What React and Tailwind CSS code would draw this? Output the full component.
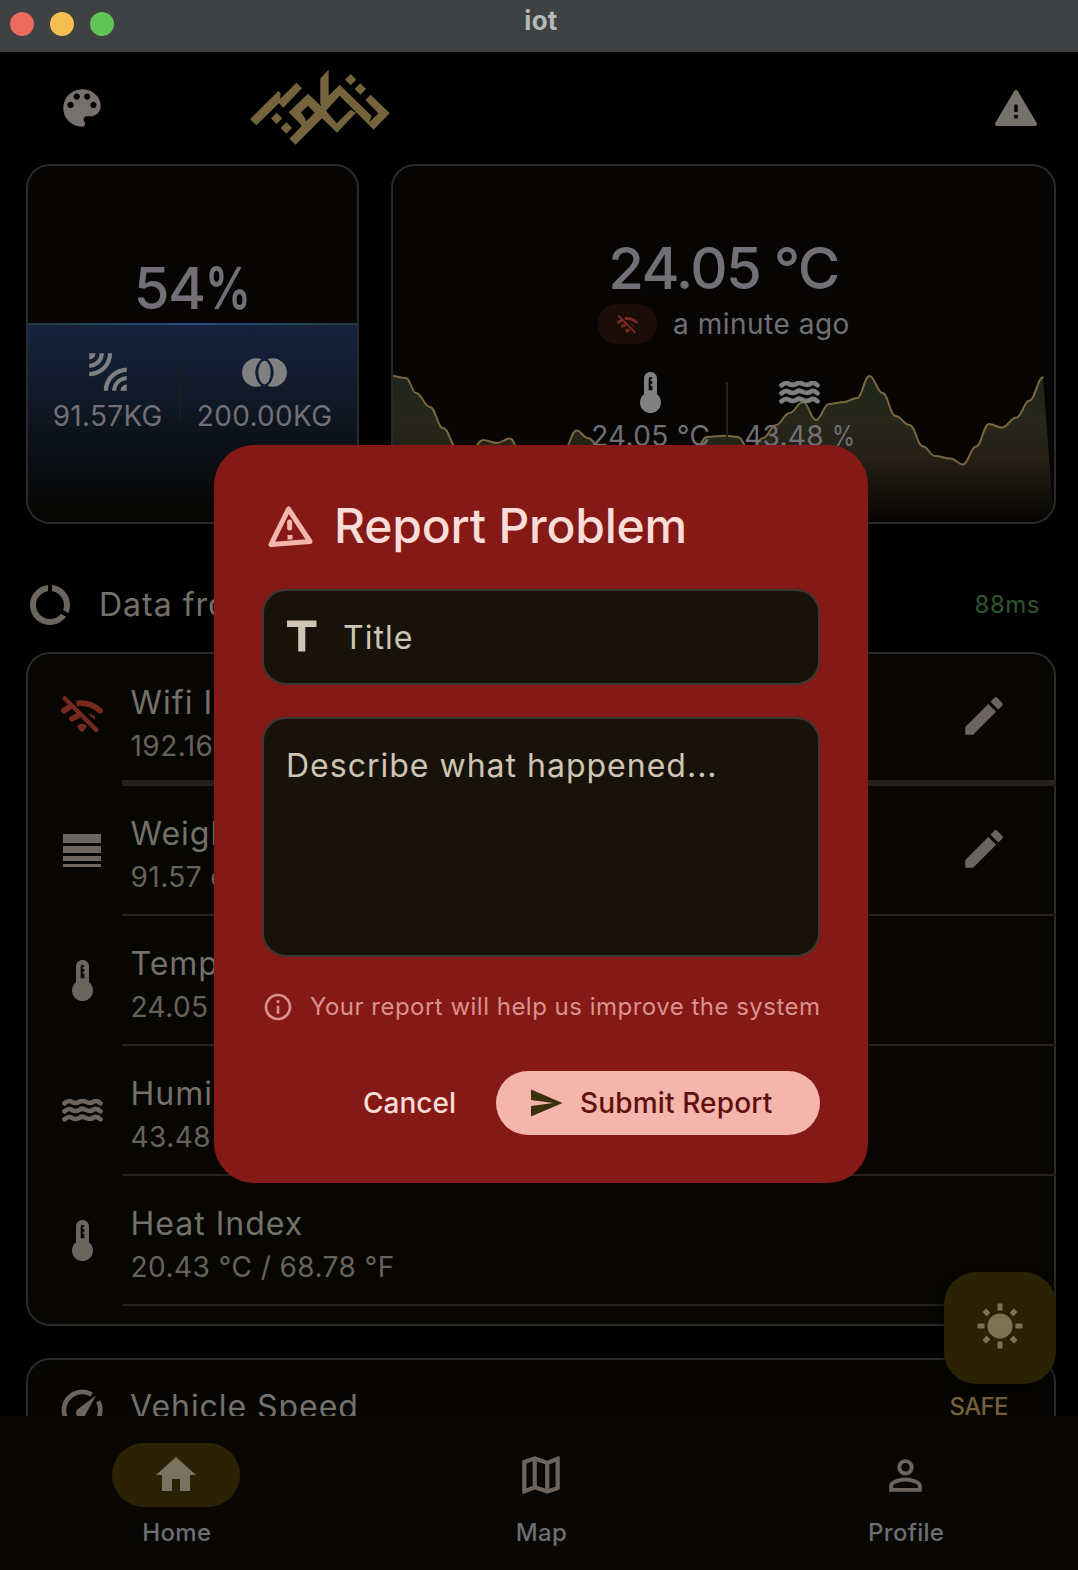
import React from "react";
import {
  MdLeakAdd,
  MdJoinFull,
  MdDataUsage,
  MdEdit,
  MdHome,
  MdOutlineMap,
  MdPersonOutline,
  MdInfoOutline,
  MdSend,
} from "react-icons/md";

function Thermometer() {
  return (
    <svg width="21" height="41" viewBox="0 0 63 123" fill="currentColor">
      <path
        fillRule="evenodd"
        d="M31.500 0C21 0 12 8 12 19V67A31.500 31.500 0 1 0 51 67V19C51 8 42 0 31.500 0ZM31 15C35 15 37 17 37 21H32V27H37V35H32V41H37V55H26V21C26 17 28 15 31 15Z"
      />
    </svg>
  );
}

function Waves() {
  const d = "M7 13C18 4 23 5 30 9S44 13 52 8S64 5 72 9S86 13 94 8S108 6 115 13";
  return (
    <svg width="41" height="23" viewBox="0 0 122 69" fill="none" stroke="currentColor" strokeWidth="14" strokeLinecap="round">
      <path d={d} />
      <path d={d} transform="translate(0 24)" />
      <path d={d} transform="translate(0 48)" />
    </svg>
  );
}

function WifiSlash({ width = 42, height = 36 }) {
  return (
    <svg width={width} height={height} viewBox="0 0 126 108" fill="none" stroke="currentColor" strokeLinecap="round">
      <path d="M11 7L106 102" strokeWidth="13" />
      <path d="M47 22Q88 17 117 44" strokeWidth="17" strokeLinecap="butt" />
      <circle cx="117" cy="44" r="8.500" fill="currentColor" stroke="none" />
      <path d="M9 44L24 34" strokeWidth="18" />
      <path d="M33 68L50 59" strokeWidth="17" />
      <path d="M80 53Q92 52 102 62V71Z" fill="currentColor" stroke="none" />
      <path d="M48 90Q63 76 78 90Q77 94 67 106Q63 109 58 106Q49 96 48 90Z" fill="currentColor" stroke="none" />
    </svg>
  );
}

function Sun() {
  return (
    <svg className="-mt-1" width="46" height="46" viewBox="0 0 46 46" fill="currentColor">
      <circle cx="23" cy="23" r="12.500" />
      {[0, 90, 180, 270].map((a) => (
        <rect key={a} x="20.500" y="0.500" width="5" height="7" rx="0.500" transform={`rotate(${a} 23 23)`} />
      ))}
      {[45, 135, 225, 315].map((a) => (
        <rect key={a} x="20.500" y="0.700" width="5" height="6" rx="0.500" transform={`rotate(${a} 23 23)`} />
      ))}
    </svg>
  );
}

function Logo() {
  return (
    <svg width="180" height="100" viewBox="0 0 540 300" fill="currentColor">
      <path d="M60 178L145 93L152 100L150 117L199 68L216 85L160 143L147 130L79 196Z" />
      <path d="M140 158L157 175L140 192L123 175ZM169 187L186 204L169 221L152 204ZM362 42L379 59L362 76L345 59ZM391 70L408 87L391 104L374 87Z" />
      <path
        fillRule="evenodd"
        d="M296 29L271 55V130L274 139L234 101L176 157L213 194L215 198L178 236L197 254L276 175L321 218L378 158L362 149L320 190L288 152L329 107L431 209L479 160L422 104L406 120L445 160L418 187L425 168L329 74L296 107ZM213 157L234 137L254 158L228 184L226 176Z"
      />
    </svg>
  );
}

const points = [
  [391, 376], [406, 378], [416, 393], [430, 407], [443, 428], [457, 448], [470, 452], [483, 440], [497, 443], [510, 438.500],
  [523, 460], [550, 466], [563, 452], [576.500, 430.500], [588, 438], [603, 452], [640, 468], [690, 462], [707, 437],
  [725, 435.700], [738, 437], [750, 452], [763, 438], [776, 425], [789.500, 413], [803, 402], [816, 420], [829, 404],
  [844, 402], [857, 398], [869.500, 376], [882.500, 393], [895.500, 416], [909.500, 425], [923, 446.500], [935, 456], [950.500, 458.500],
  [963, 464.500], [976, 446.500], [989, 424], [1002, 427.500], [1016.500, 417.500], [1029.500, 400.500], [1043, 377.500],
];
const line = points.reduce((d, [x, y], i) => {
  if (i === 0) return `M${x} ${y}`;
  const [px, py] = points[i - 1];
  const k = (x - px) * 0.42;
  return `${d}C${px + k} ${py} ${x - k} ${y} ${x} ${y}`;
}, "");

function TempChart() {
  return (
    <svg className="absolute -left-0.5 -top-0.5" width="665" height="360" viewBox="391 164 665 360">
      <defs>
        <linearGradient id="area" x1="0" y1="376" x2="0" y2="522" gradientUnits="userSpaceOnUse">
          <stop offset="0" stopColor="#1d261b" />
          <stop offset="0.300" stopColor="#27271a" />
          <stop offset="0.550" stopColor="#262117" />
          <stop offset="1" stopColor="#060503" />
        </linearGradient>
      </defs>
      <path d={`${line}L1054 522H391Z`} fill="url(#area)" />
      <path d={line} fill="none" stroke="#7a673f" strokeWidth="2" strokeLinecap="round" />
    </svg>
  );
}

function Metric({ icon, children }) {
  return (
    <div className="flex flex-col items-center">
      <div className="flex h-12 items-center text-[#808080]">{icon}</div>
      <div className="whitespace-nowrap text-[28px] leading-10 tracking-[0.3px]">{children}</div>
    </div>
  );
}

function Row({ icon, title, sub, edit, first, danger }) {
  return (
    <>
      <div className={first ? "flex h-[126px] pl-[30px] pr-[45px]" : "flex h-32 pl-[30px] pr-[45px]"}>
        <div className={`flex w-12 items-center justify-center ${danger ? "pb-[7px] text-[#76291f]" : "text-[#6b655e]"}`}>{icon}</div>
        <div className={first ? "ml-[24.5px] flex-1 pt-[25px]" : "ml-[24.5px] flex-1 pt-6"}>
          <div className="text-[32px] leading-[48px] tracking-[1px] text-[#74716b]">{title}</div>
          <div className="-mt-px text-[28px] leading-10 tracking-[0.45px] text-[#67625c]">{sub}</div>
        </div>
        {edit && (
          <div className="flex items-center pb-[3px] text-[#6b655e]">
            <MdEdit size={50} />
          </div>
        )}
      </div>
      <div className={first ? "-mr-0.5 ml-[94px] h-1.5 bg-[#24221b]" : "-mr-0.5 ml-[94px] h-0.5 bg-[#24221b]"} />
    </>
  );
}

function NavItem({ icon, label, active }) {
  return (
    <div className="flex flex-1 flex-col items-center">
      <div className={`flex h-16 w-32 items-center justify-center rounded-full ${active ? "bg-[#2b2205] text-[#7a7260]" : "text-[#6b655e]"}`}>{icon}</div>
      <div className="mt-1 pl-px text-2xl leading-[44px] font-medium tracking-[0.3px] text-[#6f6c74]">{label}</div>
    </div>
  );
}

function ReportDialog() {
  return (
    <div className="absolute left-[214px] top-[445px] flex h-[738px] w-[654px] flex-col rounded-[40px] bg-[#851916] px-12 pt-[52px]">
      <div className="flex h-[60px] items-center pl-1.5">
        <svg width="45" height="42" viewBox="0 0 45 42" fill="none" stroke="#f4b5ac" strokeWidth="5" strokeLinejoin="round">
          <path d="M20.500 3L3 38.500L42 35.500Z" />
          <path d="M21.600 16V22" strokeLinecap="round" />
          <path d="M22 29V33.500" strokeLinecap="butt" />
        </svg>
        <h1 className="-mt-0.5 ml-[21px] whitespace-nowrap text-[48px] leading-[60px] font-medium tracking-[-0.2px] text-[#fadcd8]">Report Problem</h1>
      </div>
      <div className="mt-8 flex h-24 items-center rounded-3xl border-2 border-[#3c372f] bg-[#17130b] pl-[23px]">
        <svg className="-mt-0.5" width="30" height="32" viewBox="0 0 30 32" fill="#cfc5b4">
          <path d="M0 0.500H29.500V7H18.300V31.500H11.200V7H0Z" />
        </svg>
        <span className="ml-[26px] mt-0.5 text-[32px] tracking-[1px] text-[#cfc5b4]">Title</span>
      </div>
      <div className="mt-8 h-[240px] rounded-3xl border-2 border-[#3c372f] bg-[#17130b] px-[22px] pt-[23px] text-[32px] leading-[48px] tracking-[1px] text-[#cfc5b4]">
        Describe what happened...
      </div>
      <div className="mt-8 flex h-9 items-center text-[#d9928f]">
        <MdInfoOutline size={32} className="shrink-0" />
        <span className="ml-4 whitespace-nowrap text-2xl tracking-[0.49px]">Your report will help us improve the system</span>
      </div>
      <div className="mt-[46px] flex h-16 items-center justify-end">
        <span className="text-[28px] font-medium text-[#fcdcd8]">Cancel</span>
        <div className="ml-10 flex h-16 w-[324px] items-center rounded-full bg-[#f4b5ac] pl-8">
          <MdSend size={36} color="#3a300a" />
          <span className="ml-4 whitespace-nowrap text-[28px] font-medium tracking-[0.15px] text-[#5f0f0e]">Submit Report</span>
        </div>
      </div>
    </div>
  );
}

export default function App() {
  return (
    <div className="relative flex h-[1570px] w-[1078px] flex-col overflow-hidden bg-black font-['Inter','Roboto',sans-serif]">
      <div className="relative flex h-[52px] shrink-0 items-center bg-[#3e4242] pb-1">
        <div className="flex gap-4 pl-2.5">
          <span className="h-6 w-6 rounded-full bg-[#ed6a5e]" />
          <span className="h-6 w-6 rounded-full bg-[#f5bf4f]" />
          <span className="h-6 w-6 rounded-full bg-[#61c554]" />
        </div>
        <span className="absolute inset-x-0 top-0 pl-1 text-center text-[26px] leading-[41px] font-bold tracking-[0.3px] text-[#b6b9b9]">iot</span>
      </div>

      <div className="flex h-[112px] shrink-0 items-center pl-[57px] pr-[39px]">
        <svg className="-mt-px" width="50" height="50" viewBox="0 0 24 24" fill="#77716b">
          <path d="M12 3c-4.970 0-9 4.030-9 9s4.030 9 9 9c.83 0 1.500-.67 1.500-1.500 0-.39-.15-.74-.39-1.010-.23-.26-.38-.61-.38-.99 0-.83.67-1.500 1.500-1.500H16c2.760 0 5-2.240 5-5 0-4.420-4.030-8-9-8zm-5.500 9c-.83 0-1.500-.67-1.500-1.500S5.670 9 6.500 9 8 9.670 8 10.500 7.330 12 6.500 12zm3-4C8.670 8 8 7.330 8 6.500S8.670 5 9.500 5s1.500.67 1.500 1.500S10.330 8 9.500 8zm5 0c-.83 0-1.500-.67-1.500-1.500S13.670 5 14.500 5s1.500.67 1.500 1.500S15.330 8 14.500 8zm3 4c-.83 0-1.500-.67-1.500-1.500S16.670 9 17.500 9s1.500.67 1.500 1.500-.67 1.500-1.500 1.500z" />
        </svg>
        <div className="ml-[123px] mt-1 text-[#75633e]">
          <Logo />
        </div>
        <svg className="ml-auto" width="46" height="40" viewBox="0 0 46 40">
          <path d="M23 4L42 36H4Z" fill="#77716b" stroke="#77716b" strokeWidth="4" strokeLinejoin="round" />
          <path d="M23 18V22.500" stroke="#000" strokeWidth="3.600" strokeLinecap="round" />
          <path d="M23 27V30.500" stroke="#000" strokeWidth="3.600" />
        </svg>
      </div>

      <div className="flex h-[1252px] shrink-0 flex-col overflow-hidden pl-[26px] pr-[22px]">
        <div className="flex shrink-0 gap-8">
          <div className="relative h-[360px] w-[333px] overflow-hidden rounded-3xl border-2 border-[#2a2a2a] bg-[#060503] pt-[92px] text-[#726f77]">
            <div className="absolute inset-x-0 top-[157px] h-[200px] bg-linear-to-b from-[#172340] via-[#101a29] via-35% to-[#060503]">
              <div className="h-0.5 bg-linear-to-r from-[#233f3a] via-[#234a80] to-[#233f3a]" />
            </div>
            <div className="relative text-center text-[58px] leading-[60px] font-medium tracking-[-1.6px]">
              54<span className="-mr-[10px] inline-block origin-left scale-x-[0.79] font-semibold">%</span>
            </div>
            <div className="relative mt-[30px] flex items-center justify-center gap-4">
              <Metric icon={<MdLeakAdd size={50} />}>91.57KG</Metric>
              <div className="h-[60px] w-0.5 bg-[#1c1c1a]" />
              <Metric icon={<MdJoinFull size={49} />}>200.00KG</Metric>
            </div>
          </div>
          <div className="relative h-[360px] w-[665px] overflow-hidden rounded-3xl border-2 border-[#2a2a2a] bg-[#060503] pt-[72px] text-[#726f77]">
            <TempChart />
            <div className="relative text-center text-[58px] leading-[60px] font-medium tracking-[-1.7px]">24.05 °C</div>
            <div className="relative mt-[6px] flex items-center justify-center gap-4">
              <div className="flex h-10 w-[60px] items-center justify-center rounded-full bg-[#1b0b09] text-[#76291f]">
                <WifiSlash width={21} height={18} />
              </div>
              <span className="text-[28px] leading-10 tracking-[0.5px]">a minute ago</span>
            </div>
            <div className="relative mt-[24px] flex items-center justify-center gap-4">
              <Metric icon={<Thermometer />}>24.05 °C</Metric>
              <div className="h-[60px] w-0.5 bg-[#24221b]" />
              <Metric icon={<Waves />}>
                43.48 <span className="-mr-1 inline-block origin-left scale-x-[0.84]">%</span>
              </Metric>
            </div>
          </div>
        </div>

        <div className="flex h-32 shrink-0 items-center">
          <div className="mt-[33px] flex w-full items-center">
            <MdDataUsage size={48} color="#6b655e" />
            <span className="ml-[25px] text-[32px] tracking-[1px] text-[#74716b]">Data from</span>
            <span className="ml-auto pr-4 text-2xl tracking-[0.5px] text-[#2f5530]">88ms</span>
          </div>
        </div>

        <div className="h-[674px] shrink-0 rounded-3xl border-2 border-[#2a2a2a] bg-[#070603]">
          <Row first danger edit icon={<WifiSlash />} title="Wifi IP" sub="192.168.1.10" />
          <Row
            edit
            icon={
              <svg width="38" height="33" viewBox="0 0 38 33" fill="currentColor">
                <path d="M0 0H38V9H0ZM0 12H38V19H0ZM0 22H38V27H0ZM0 30H38V33H0Z" />
              </svg>
            }
            title="Weight"
            sub="91.57 of 200"
          />
          <Row icon={<Thermometer />} title="Temperature" sub="24.05 °C" />
          <Row icon={<Waves />} title="Humidity" sub="43.48 %" />
          <Row icon={<Thermometer />} title="Heat Index" sub="20.43 °C / 68.78 °F" />
        </div>

        <div className="mt-8 flex h-[120px] shrink-0 items-start rounded-3xl border-2 border-[#2a2a2a] bg-[#060503] pl-[33px] pr-[46px] pt-[23px]">
          <svg className="mt-[6px]" width="42" height="42" viewBox="0 0 42 42" fill="none" stroke="#6b655e" strokeWidth="4.600">
            <path d="M30.700 5.500A18.300 18.300 0 0 0 8.100 33.900" />
            <path d="M37.200 12.400A18.300 18.300 0 0 1 33.900 33.900" />
            <path d="M35 6.500L25 24.500A5 5 0 1 1 17.500 19.500Z" fill="#6b655e" stroke="none" />
          </svg>
          <span className="ml-[27px] text-[32px] leading-[48px] tracking-[0.95px] text-[#74716b]">Vehicle Speed</span>
          <span className="ml-auto text-2xl leading-[48px] font-medium tracking-[-0.6px] text-[#75603a]">SAFE</span>
        </div>
      </div>

      <div className="flex h-[154px] shrink-0 bg-[#080703] pt-[27px]">
        <div className="-ml-1.5 flex w-[1094px] shrink-0">
          <NavItem active icon={<MdHome size={48} />} label="Home" />
          <NavItem icon={<MdOutlineMap size={50} />} label="Map" />
          <NavItem icon={<MdPersonOutline size={49} />} label="Profile" />
        </div>
      </div>

      <div className="absolute left-[944px] top-[1272px] flex h-28 w-28 items-center justify-center rounded-[32px] bg-[#2b2205] text-[#7d7352] shadow-[0_4px_12px_rgba(0,0,0,0.6)]">
        <Sun />
      </div>

      <ReportDialog />
    </div>
  );
}
